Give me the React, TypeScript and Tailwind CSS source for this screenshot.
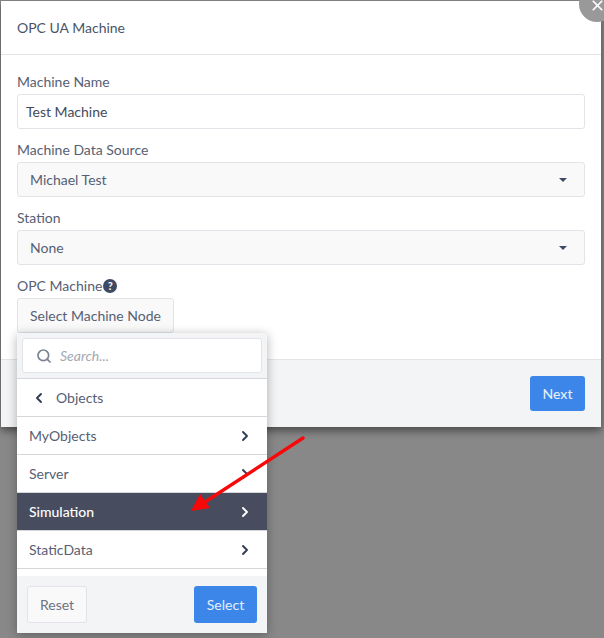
import React from "react";
import { ChevronLeft, ChevronRight, Search, X } from "lucide-react";

const font = { fontFamily: 'Lato, sans-serif' };

function Label({ children }: { children: React.ReactNode }) {
  return <div className="h-[21px] mb-[2px] text-[14px] leading-[21px] text-[#566074]">{children}</div>;
}

function SelectBox({ value }: { value: string }) {
  return (
    <div className="h-[35px] mb-[10px] flex items-center justify-between pl-[12px] pr-[17px] rounded-[3px] border border-[#e2e4ea] bg-[#f9f9f9] text-[14px] text-[#566074]">
      <span>{value}</span>
      <span className="w-0 h-0 border-x-[4px] border-x-transparent border-t-[4px] border-t-[#3d4a66]" />
    </div>
  );
}

function Row({ label, active }: { label: string; active?: boolean }) {
  return (
    <div
      className={
        "h-[38px] flex items-center justify-between pl-[12px] pr-[14px] border-b border-[#d5d7da] text-[14px] " +
        (active ? "bg-[#474d5f] text-white font-medium" : "bg-white text-[#566074]")
      }
    >
      <span>{label}</span>
      <ChevronRight size={16} strokeWidth={2.8} className={active ? "text-white" : "text-[#2f3a52]"} />
    </div>
  );
}

export default function App() {
  return (
    <div className="relative w-[604px] h-[638px] overflow-hidden bg-[#888888] pt-px pl-px" style={font}>
      <div className="relative w-[600px] h-[426px] bg-white flex flex-col shadow-[0_4px_8px_rgba(0,0,0,0.45)]">
        <div className="h-[54px] shrink-0 border-b border-[#e2e4e8] flex items-center pl-[16px] text-[14px] text-[#4a5568]">
          OPC UA Machine
        </div>
        <div className="flex-1 pt-[16px] px-[16px]">
          <Label>Machine Name</Label>
          <div className="h-[35px] mb-[10px] flex items-center px-[8px] rounded-[3px] border border-[#e2e4ea] bg-white text-[14px] text-[#434b5a]">
            Test Machine
          </div>
          <Label>Machine Data Source</Label>
          <SelectBox value="Michael Test" />
          <Label>Station</Label>
          <SelectBox value="None" />
          <div className="h-[21px] mb-[2px] flex items-center gap-[1px] text-[14px] text-[#566074]">
            <span>OPC Machine</span>
            <span className="w-[14px] h-[14px] rounded-full bg-[#3d4a66] text-white text-[11px] leading-[14px] text-center font-bold">?</span>
          </div>
          <div className="relative w-[157px]">
            <div className="h-[35px] flex items-center justify-center rounded-[3px] border border-[#e2e4ea] bg-[#f9f9f9] text-[14px] text-[#566074]">
              Select Machine Node
            </div>
            <div className="absolute z-10 left-0 top-[35px] w-[250px] h-[300px] bg-white flex flex-col shadow-[0_2px_10px_rgba(0,0,0,0.3)]">
              <div className="h-[46px] shrink-0 bg-[#f3f4f6] border-b border-[#d5d7da] px-[5px] pt-[5px]">
                <div className="h-[35px] flex items-center gap-[8px] pl-[13px] rounded-[3px] border border-[#e2e4ea] bg-white">
                  <Search size={16} strokeWidth={2.6} className="text-[#7c8494]" />
                  <span className="text-[14px] italic text-[#a3a8b2]">Search...</span>
                </div>
              </div>
              <div className="h-[38px] shrink-0 flex items-center gap-[9px] pl-[14px] border-b border-[#d5d7da] text-[14px] text-[#566074]">
                <ChevronLeft size={16} strokeWidth={2.8} className="text-[#2f3a52]" />
                <span>Objects</span>
              </div>
              <Row label="MyObjects" />
              <Row label="Server" />
              <Row label="Simulation" active />
              <Row label="StaticData" />
              <div className="flex-1" />
              <div className="h-[57px] shrink-0 bg-[#f3f4f6] flex items-center justify-between px-[10px]">
                <div className="w-[60px] h-[37px] flex items-center justify-center rounded-[3px] border border-[#e2e4ea] bg-[#f9f9f9] text-[14px] text-[#6b7280]">
                  Reset
                </div>
                <div className="w-[63px] h-[37px] flex items-center justify-center rounded-[3px] bg-[#3b86e8] text-[14px] text-[#e4eefc]">
                  Select
                </div>
              </div>
            </div>
          </div>
        </div>
        <div className="h-[68px] shrink-0 border-t border-[#e2e4e8] bg-[#f3f4f6] flex items-center justify-end pr-[16px]">
          <div className="w-[55px] h-[35px] flex items-center justify-center rounded-[3px] bg-[#3b86e8] text-[14px] font-medium text-[#e4eefc]">
            Next
          </div>
        </div>
        <div className="absolute z-20 right-[-14px] top-[-15px] w-[36px] h-[36px] rounded-full bg-[#999999] flex items-center justify-center">
          <X size={17} strokeWidth={2.4} className="text-white mt-[3px]" />
        </div>
      </div>
      <svg className="absolute z-30 left-0 top-0 pointer-events-none" width="604" height="638" viewBox="0 0 604 638">
        <line x1="303" y1="438" x2="205" y2="502" stroke="#f80808" strokeWidth="3.4" strokeLinecap="round" />
        <polygon points="191,511 200,494 210,508" fill="#f80808" />
      </svg>
    </div>
  );
}
